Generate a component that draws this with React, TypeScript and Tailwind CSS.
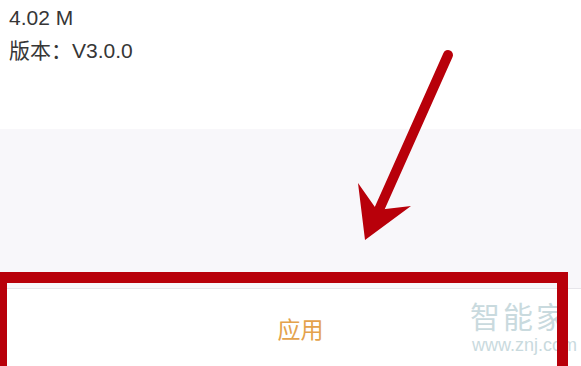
export default function App() {
  return (
    <div
      className="relative w-[581px] h-[366px] overflow-hidden bg-white"
      style={{ fontFamily: '"Liberation Sans", "Noto Sans CJK SC", sans-serif' }}
    >
      <div className="h-[129px] pl-[9px] pt-[1px] text-[#363636] text-[21px] leading-[33px]">
        <div>4.02 M</div>
        <div>版本：V3.0.0</div>
      </div>
      <div className="h-[160px] bg-[#f8f7fa] border-b border-[#e6e5ea]" />
      <div className="h-[77px] flex items-center justify-center pt-[2px] pl-[20px]">
        <span className="text-[#e4a24c] text-[23px] font-['Noto_Sans_CJK_SC',sans-serif]">应用</span>
      </div>

      {/* watermark */}
      <div className="absolute left-[470px] top-[299px] flex flex-col items-start gap-[4px] text-[#c9dade]">
        <span className="text-[30px] leading-[32px] tracking-[3px] font-['Noto_Sans_CJK_SC',sans-serif]">智能家</span>
        <span className="text-[18px] leading-[20px] pl-[2px]">www.znj.com</span>
      </div>

      {/* red annotation box */}
      <div className="absolute left-0 top-[272px] w-[568px] h-[100px] border-t-[11px] border-l-[7px] border-r-[11px] border-[#b8000a]" />

      {/* arrow */}
      <svg className="absolute inset-0" width="581" height="366" viewBox="0 0 581 366">
        <line x1="448" y1="55" x2="378" y2="212" stroke="#b8000a" strokeWidth="10" strokeLinecap="round" />
        <polygon points="365,240 358,183 377,210 411,206" fill="#b8000a" />
      </svg>
    </div>
  );
}
